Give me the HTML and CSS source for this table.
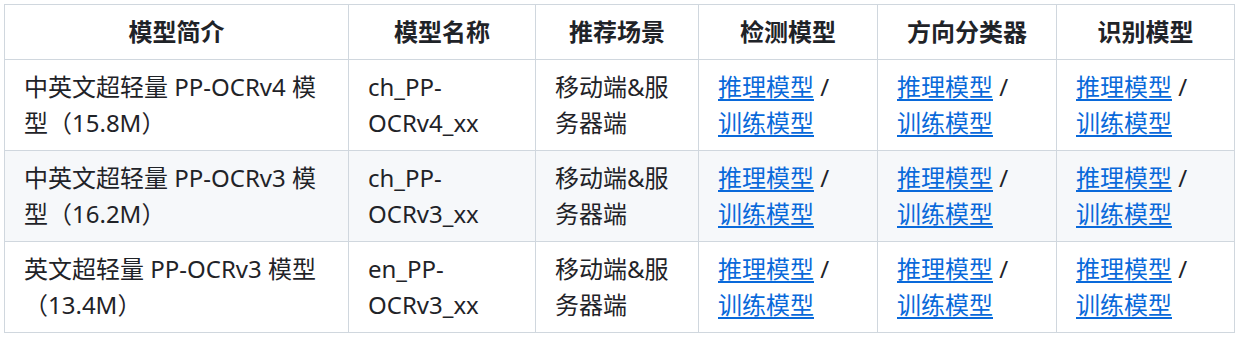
FILE: index.html
```html
<!DOCTYPE html>
<html lang="zh-CN">
<head>
<meta charset="utf-8">
<title>PP-OCR 模型列表</title>
<link rel="stylesheet" href="styles.css">
</head>
<body>
<table class="model-table">
  <colgroup>
    <col class="c1"><col class="c2"><col class="c3"><col class="c4"><col class="c5"><col class="c6">
  </colgroup>
  <thead>
    <tr>
      <th>模型简介</th>
      <th>模型名称</th>
      <th>推荐场景</th>
      <th>检测模型</th>
      <th>方向分类器</th>
      <th>识别模型</th>
    </tr>
  </thead>
  <tbody>
    <tr>
      <td>中英文超轻量 PP-OCRv4 模型（15.8M）</td>
      <td>ch_PP-OCRv4_xx</td>
      <td>移动端&amp;服务器端</td>
      <td><a href="#">推理模型</a> / <a href="#">训练模型</a></td>
      <td><a href="#">推理模型</a> / <a href="#">训练模型</a></td>
      <td><a href="#">推理模型</a> / <a href="#">训练模型</a></td>
    </tr>
    <tr>
      <td>中英文超轻量 PP-OCRv3 模型（16.2M）</td>
      <td>ch_PP-OCRv3_xx</td>
      <td>移动端&amp;服务器端</td>
      <td><a href="#">推理模型</a> / <a href="#">训练模型</a></td>
      <td><a href="#">推理模型</a> / <a href="#">训练模型</a></td>
      <td><a href="#">推理模型</a> / <a href="#">训练模型</a></td>
    </tr>
    <tr>
      <td>英文超轻量 PP-OCRv3 模型（13.4M）</td>
      <td>en_PP-OCRv3_xx</td>
      <td>移动端&amp;服务器端</td>
      <td><a href="#">推理模型</a> / <a href="#">训练模型</a></td>
      <td><a href="#">推理模型</a> / <a href="#">训练模型</a></td>
      <td><a href="#">推理模型</a> / <a href="#">训练模型</a></td>
    </tr>
  </tbody>
</table>
</body>
</html>
```

FILE: styles.css
```css
html, body {
  background: #ffffff;
}
body {
  margin: 4px;
  font-family: "Noto Sans", "Noto Sans CJK SC", sans-serif;
  font-size: 24px;
  line-height: 1.5;
  color: #1f2328;
}
.model-table {
  border-collapse: collapse;
  border-spacing: 0;
  table-layout: fixed;
  width: 1230px;
}
.c1 { width: 344px; }
.c2 { width: 187px; }
.c3 { width: 163px; }
.c4 { width: 179px; }
.c5 { width: 179px; }
.c6 { width: 178px; }
.model-table th,
.model-table td {
  border: 1px solid #d0d7de;
  padding: 9px 19px;
  vertical-align: top;
  word-wrap: break-word;
}
.model-table th {
  font-weight: 700;
  text-align: center;
}
.model-table td {
  text-align: left;
}
.model-table tbody tr:nth-child(2) {
  background: #f6f8fa;
}
.model-table a {
  color: #0969da;
  text-decoration: underline;
  text-underline-offset: 3px;
}
```
